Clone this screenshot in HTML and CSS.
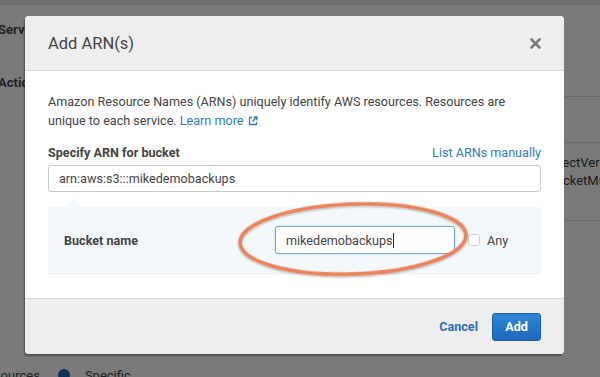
FILE: index.html
```html
<!DOCTYPE html>
<html>
<head>
<meta charset="utf-8">
<link rel="stylesheet" href="styles.css">
</head>
<body>
<div class="page">
  <div class="topbar"></div>
  <div class="page-main">
    <div class="left-col">
      <div class="bg-label first">Service</div>
      <div class="bg-label second">Actions</div>
    </div>
    <div class="right-col">
      <div class="bg-rule r1"></div>
      <div class="bg-rule r2"></div>
      <div class="bg-item">GetObjectVersion</div>
      <div class="bg-item">PutBucketMultipart</div>
      <div class="bg-rule r3"></div>
    </div>
  </div>
  <div class="bg-bottom">
    <span class="bg-res">Resources</span>
    <span class="bg-radio"></span>
    <span class="bg-spec">Specific</span>
  </div>
</div>
<div class="overlay"></div>

<div class="modal">
  <div class="modal-header">
    <h2 class="modal-title">Add ARN(s)</h2>
    <svg class="close" width="11" height="11" viewBox="0 0 11 11"><path d="M1.5 1.5 L9.5 9.5 M9.5 1.5 L1.5 9.5" stroke="#7a7a7a" stroke-width="2.6" stroke-linecap="round"/></svg>
  </div>
  <div class="modal-body">
    <p class="intro">Amazon Resource Names (ARNs) uniquely identify AWS resources. Resources are unique to each service. <a class="link">Learn more <svg class="ext" width="10" height="10" viewBox="0 0 10 10"><path d="M4 1.5 H1.5 V8.5 H8.5 V6" fill="none" stroke="#2f7bc4" stroke-width="1.3"/><path d="M5.5 1 H9 V4.5 M9 1 L4.5 5.5" fill="none" stroke="#2f7bc4" stroke-width="1.3"/></svg></a></p>
    <div class="label-row">
      <span class="field-label">Specify ARN for bucket</span>
      <a class="link">List ARNs manually</a>
    </div>
    <div class="text-input arn">arn:aws:s3:::mikedemobackups</div>
    <div class="panel">
      <span class="field-label bucket">Bucket name</span>
      <div class="text-input focus">mikedemobackups<span class="caret"></span></div>
      <span class="checkbox"></span>
      <span class="any">Any</span>
    </div>
  </div>
  <div class="modal-footer">
    <a class="cancel">Cancel</a>
    <button class="add">Add</button>
  </div>
</div>

<svg class="annot" width="260" height="100" viewBox="0 0 260 100">
  <defs>
    <filter id="sh" x="-10%" y="-20%" width="120%" height="140%">
      <feDropShadow dx="0" dy="1" stdDeviation="0.8" flood-color="#000" flood-opacity="0.35"/>
    </filter>
  </defs>
  <ellipse cx="130" cy="48" rx="113" ry="35" transform="rotate(-2 130 48)" fill="none" stroke="#eb8259" stroke-width="3.5" filter="url(#sh)"/>
</svg>
</body>
</html>
```

FILE: styles.css
```css
* { box-sizing: border-box; }
html, body { margin: 0; padding: 0; }
body {
  width: 600px;
  height: 377px;
  overflow: hidden;
  font-family: Roboto, "Liberation Sans", Arial, sans-serif;
  background: #f5f5f5;
  position: relative;
}
.page { width: 600px; height: 377px; display: flex; flex-direction: column; overflow: hidden; }
.topbar { height: 5px; background: #dedede; }
.page-main { display: flex; justify-content: space-between; flex: 1; }
.left-col { padding-top: 17px; margin-left: -2px; }
.bg-label { font-size: 13px; font-weight: 700; color: #444; }
.bg-label.second { margin-top: 38px; }
.right-col { width: 100px; margin-right: -65px; padding-top: 91px; }
.bg-rule { height: 1px; background: #d0d0d0; }
.bg-rule.r2 { margin-top: 45px; margin-bottom: 11px; }
.bg-rule.r3 { margin-top: 30px; }
.bg-item { font-size: 13px; color: #333; line-height: 18px; white-space: nowrap; }
.bg-item:nth-of-type(3) { margin-left: -42px; }
.bg-item:nth-of-type(4) { margin-left: -37px; }
.bg-bottom { display: flex; align-items: center; height: 16px; margin-left: -21px; margin-bottom: -6px; font-size: 13px; color: #444; }
.bg-radio { width: 12px; height: 12px; border-radius: 50%; background: #1f64b0; margin: 0 15px 0 18px; }

.overlay { position: absolute; inset: 0; background: rgba(0,0,0,0.5); }

.modal {
  position: absolute;
  left: 25px; top: 16px;
  width: 539px; height: 338px;
  border-radius: 4px;
  overflow: hidden;
  background: #fff;
  box-shadow: -1px 2px 2px rgba(0,0,0,0.35);
  display: flex; flex-direction: column;
}
.modal-header {
  height: 55px;
  background: #eeeeee;
  border-bottom: 1px solid #d9d9d9;
  display: flex; align-items: center; justify-content: space-between;
  padding: 0 23px 0 23px;
}
.modal-title { margin: 0; font-size: 16.5px; font-weight: 400; color: #444; }
.close { margin-top: 1px; }
.modal-body { padding: 21px 23px 22px 23px; flex: 1; }
.intro { margin: 0; font-size: 12.6px; line-height: 19px; color: #444; }
.link { color: #2f7bc4; text-decoration: none; font-size: 12.6px; }
.ext { vertical-align: -1px; margin-left: 1px; }
.label-row { display: flex; justify-content: space-between; align-items: baseline; margin-top: 15px; height: 19px; }
.field-label { font-size: 12.6px; font-weight: 700; color: #444; }
.text-input {
  height: 27px;
  border: 1px solid #c9c9c9;
  border-radius: 3px;
  font-size: 12.6px;
  color: #444;
  padding-left: 10px;
  display: flex; align-items: center;
  background: #fff;
}
.arn { margin-top: 1px; }
.panel {
  margin-top: 15px;
  height: 67px;
  background: #f2f8fc;
  border-bottom: 1px solid #e6eef4;
  display: flex; align-items: center;
  padding-left: 16px;
  position: relative;
}
.panel::before {
  content: "";
  position: absolute;
  left: 17px; top: -8px;
  border-left: 8px solid transparent;
  border-right: 8px solid transparent;
  border-bottom: 8px solid #f2f8fc;
}
.bucket { width: 211px; }
.focus { width: 180px; height: 28px; border-color: #6fa3da; box-shadow: 0 0 2px rgba(80,140,210,0.35); }
.caret { display: inline-block; width: 1px; height: 15px; background: #222; margin-left: 1px; }
.checkbox { width: 12px; height: 12px; border: 1px solid #cfcfcf; border-radius: 3px; background: #fff; margin-left: 13px; }
.any { font-size: 12.6px; color: #444; margin-left: 7px; }

.modal-footer {
  height: 56px;
  background: #eeeeee;
  border-top: 1px solid #d6d6d6;
  display: flex; align-items: center; justify-content: flex-end;
  padding: 0 23px;
}
.cancel { font-size: 12.6px; font-weight: 700; color: #2a6fbd; margin-right: 14px; }
.add {
  width: 49px; height: 28px;
  border: 1px solid #1b5ea8;
  border-radius: 3px;
  background: linear-gradient(#2c86d8, #1f68ba);
  color: #fff;
  font-family: inherit;
  font-size: 12.6px; font-weight: 700;
  padding: 0;
}
.annot { position: absolute; left: 223px; top: 191px; }
```
